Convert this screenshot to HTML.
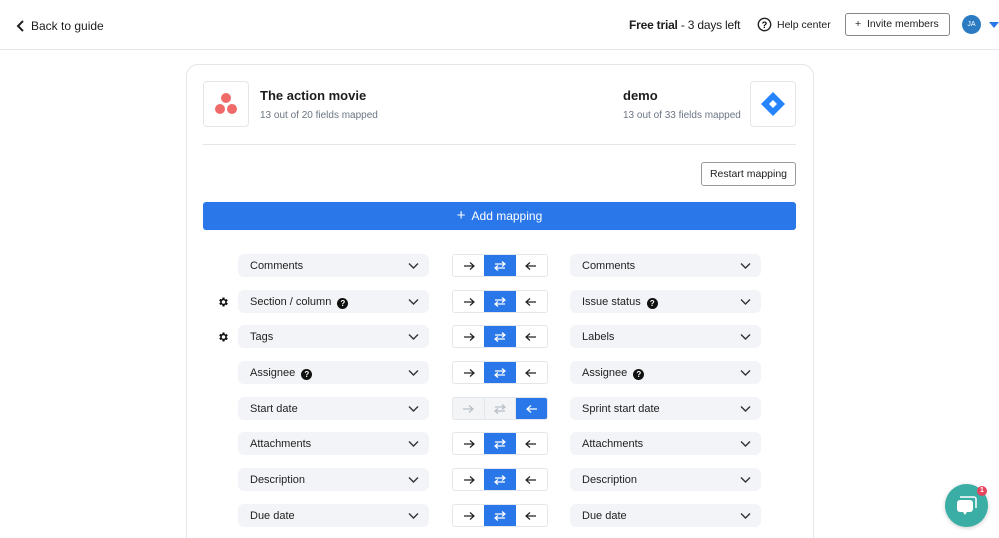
<!DOCTYPE html>
<html style="overflow:hidden;height:538px"><head><meta charset="utf-8"><style>
*{box-sizing:border-box;margin:0;padding:0}
body{width:999px;height:538px;overflow:hidden;background:#fff;font-family:"Liberation Sans",sans-serif;color:#1d1d1f;position:relative}
.a{position:absolute}
.top{left:0;top:0;width:999px;height:50px;border-bottom:1px solid #e6e8ec}
.card{left:186px;top:64px;width:628px;height:500px;border:1px solid #e3e6ea;border-radius:12px}
.logo{width:46px;height:46px;border:1px solid #e3e6ea;border-radius:4px;background:#fff}
.dd{height:23px;width:191px;background:#f2f4f7;border-radius:6px;font-size:11px;line-height:25px;padding-left:12px;color:#222}
.dd svg.ch{position:absolute;right:10px;top:8px}
.q{display:inline-block;width:11px;height:11px;border-radius:50%;background:#111;color:#fff;font-size:8px;line-height:11px;text-align:center;font-weight:bold;margin-left:6px;vertical-align:-1px}
.sw{width:96px;height:23px;border:1px solid #e3e6ea;border-radius:3px;display:flex;overflow:hidden;background:#fff}
.sw div{flex:1;display:flex;align-items:center;justify-content:center;color:#222}
.sw .on{background:#2a77ea;color:#fff}
.sw.dis div{background:#f3f4f6;color:#b8bec8}
.sw.dis div+div{border-left:1px solid #e3e6ea}
.sw.dis .on{background:#2a77ea;color:#fff}
</style></head><body>
<div class="a top"></div>
<svg class="a" style="left:16px;top:19px" width="10" height="14"><path d="M7 2 L2 7 L7 12" stroke="#222" stroke-width="2" fill="none"/></svg>
<div class="a" style="left:31px;top:19px;font-size:12px">Back to guide</div>
<div class="a" style="left:629px;top:18px;font-size:12px;letter-spacing:-0.2px"><b>Free trial</b> - 3 days left</div>
<svg class="a" style="left:757px;top:17px" width="15" height="15"><circle cx="7.5" cy="7.5" r="6.2" stroke="#222" stroke-width="1.4" fill="none"/><text x="7.5" y="11" font-size="9" text-anchor="middle" font-family="Liberation Sans" font-weight="bold">?</text></svg>
<div class="a" style="left:777px;top:19px;font-size:10.5px">Help center</div>
<div class="a" style="left:845px;top:13px;width:105px;height:23px;border:1px solid #888;border-radius:3px;font-size:10.5px;line-height:21px;padding-left:9px">+&nbsp;&nbsp;Invite members</div>
<div class="a" style="left:962px;top:15px;width:19px;height:19px;border-radius:50%;background:#2a7bc1;color:#fff;font-size:7px;line-height:19px;text-align:center">JA</div>
<svg class="a" style="left:989px;top:22px" width="10" height="6"><path d="M0 0 H10 L5 6Z" fill="#2a77ea"/></svg>

<div class="a card"></div>
<div class="a logo" style="left:203px;top:81px"></div>
<svg class="a" style="left:203px;top:81px" width="46" height="46"><circle cx="23" cy="17" r="5" fill="#f06a6a"/><circle cx="17" cy="28" r="5" fill="#f06a6a"/><circle cx="29" cy="28" r="5" fill="#f06a6a"/></svg>
<div class="a" style="left:260px;top:88px;font-size:13px;font-weight:bold">The action movie</div>
<div class="a" style="left:260px;top:110px;font-size:10px;color:#6b7684">13 out of 20 fields mapped</div>
<div class="a" style="left:623px;top:88px;font-size:13px;font-weight:bold">demo</div>
<div class="a" style="left:623px;top:110px;font-size:10px;color:#6b7684">13 out of 33 fields mapped</div>
<div class="a logo" style="left:750px;top:81px"></div>
<svg class="a" style="left:750px;top:81px" width="46" height="46"><path d="M23 11 L35 23 L23 35 L11 23Z" fill="#2684ff"/><path d="M23 19 L27 23 L23 27 L19 23Z" fill="#fff"/></svg>
<div class="a" style="left:203px;top:144px;width:593px;height:1px;background:#e3e6ea"></div>
<div class="a" style="left:701px;top:162px;width:95px;height:24px;border:1px solid #999;border-radius:3px;font-size:10.5px;line-height:22px;text-align:center">Restart mapping</div>
<div class="a" style="left:203px;top:202px;width:593px;height:28px;background:#2a77ea;border-radius:3px;color:#fff;font-size:12px;line-height:28px;text-align:center"><span style="font-size:15px">+</span>&nbsp; Add mapping</div>

<div id="rows"></div>
<script>
var R=[["Comments","Comments",0,0,0],["Section / column","Issue status",1,1,0],["Tags","Labels",1,0,0],["Assignee","Assignee",0,1,0],["Start date","Sprint start date",0,0,1],["Attachments","Attachments",0,0,0],["Description","Description",0,0,0],["Due date","Due date",0,0,0]];
var tops=[254,290,325,361,397,432,468,504],h="";
var ch='<svg class="ch" width="11" height="8"><path d="M1 1.5 L5.5 6 L10 1.5" stroke="#333" stroke-width="1.4" fill="none"/></svg>';
var R_='<svg width="12" height="10"><path d="M1 5H11M7 1.5L11 5L7 8.5" stroke="currentColor" stroke-width="1.2" fill="none"/></svg>';
var L_='<svg width="12" height="10"><path d="M11 5H1M5 1.5L1 5L5 8.5" stroke="currentColor" stroke-width="1.2" fill="none"/></svg>';
var S_='<svg width="12" height="12"><path d="M1 4H11M8 1.5L11 4L8 6.5M11 8H1M4 5.5L1 8L4 10.5" stroke="currentColor" stroke-width="1.2" fill="none"/></svg>';
var gear='<svg width="12" height="12" viewBox="0 0 24 24"><path fill="#111" d="M19.4 13a7.5 7.5 0 000-2l2.1-1.6-2-3.5-2.5 1a7.6 7.6 0 00-1.7-1L15 3h-4l-.4 2.7a7.6 7.6 0 00-1.7 1l-2.5-1-2 3.5L6.6 11a7.5 7.5 0 000 2l-2.1 1.6 2 3.5 2.5-1a7.6 7.6 0 001.7 1L11 21h4l.4-2.7a7.6 7.6 0 001.7-1l2.5 1 2-3.5zM13 15.5A3.5 3.5 0 1113 8.5a3.5 3.5 0 010 7z"/></svg>';
R.forEach(function(r,i){var t=tops[i];
if(r[2])h+='<div class="a" style="left:217px;top:'+(t+5)+'px">'+gear+'</div>';
var q=r[3]?'<span class="q">?</span>':'';
h+='<div class="a dd" style="left:238px;top:'+t+'px">'+r[0]+q+ch+'</div>';
h+='<div class="a sw'+(r[4]?' dis':'')+'" style="left:452px;top:'+t+'px"><div>'+R_+'</div><div'+(r[4]?'':' class="on"')+'>'+S_+'</div><div'+(r[4]?' class="on"':'')+'>'+L_+'</div></div>';
h+='<div class="a dd" style="left:570px;top:'+t+'px">'+r[1]+q+ch+'</div>';});
document.getElementById("rows").innerHTML=h;
</script>
<div class="a" style="left:945px;top:484px;width:43px;height:43px;border-radius:50%;background:#3aaea5;box-shadow:0 1px 4px rgba(0,0,0,.2)"></div>
<svg class="a" style="left:954px;top:494px" width="26" height="24"><path d="M6 3 h14 a2 2 0 0 1 2 2 v9" stroke="#fff" stroke-width="1.5" fill="none"/><rect x="3" y="6" width="16" height="12" rx="3" fill="#fff"/><path d="M9 18 L11 21 L13 18Z" fill="#fff"/></svg>
<div class="a" style="left:977px;top:486px;width:10px;height:10px;border-radius:50%;background:#e8445f;color:#fff;font-size:7px;line-height:10px;text-align:center;font-weight:bold">1</div>
</body></html>
